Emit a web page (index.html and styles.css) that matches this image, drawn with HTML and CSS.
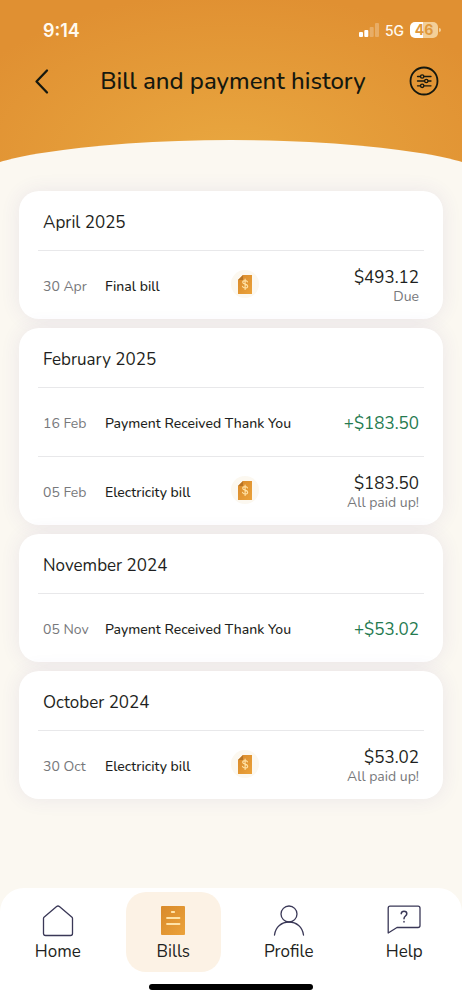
FILE: index.html
```html
<!DOCTYPE html>
<html lang="en">
<head>
  <meta charset="UTF-8">
  <meta name="viewport" content="width=device-width, initial-scale=1.0">
  <title>Bill and payment history</title>
  <link rel="stylesheet" href="styles.css">
</head>
<body>
  <!-- shared shapes for the bill icon -->
  <svg class="defs" width="0" height="0" aria-hidden="true">
    <defs>
      <linearGradient id="gold" x1="0" y1="0" x2="1" y2="1">
        <stop offset="0" stop-color="#d98a2b"/>
        <stop offset="1" stop-color="#eba23a"/>
      </linearGradient>
      <symbol id="bill" viewBox="0 0 28 28">
        <circle cx="14" cy="14" r="14" fill="#fcf8f0"/>
        <path d="M12 5h9v19H7V10z" fill="url(#gold)"/>
        <path d="M12 5v5H7z" fill="#b87526"/>
        <path d="M16.500 11.900c-.3-.9-1.200-1.300-2.400-1.300-1.400 0-2.400.6-2.400 1.700 0 2.500 5 1.200 5 3.900 0 1.100-1.100 1.800-2.500 1.800s-2.400-.6-2.700-1.600M14.100 9.100v10.400" fill="none" stroke="#ffe3a8" stroke-width="1.100" stroke-linecap="round"/>
      </symbol>
    </defs>
  </svg>

  <header class="header">
    <div class="status">
      <span class="time">9:14</span>
      <div class="status-right">
        <svg width="20" height="14" viewBox="0 0 20 14" fill="#fff" aria-hidden="true">
          <rect x="0" y="9" width="4" height="5" rx="1"/>
          <rect x="5.300" y="7" width="4" height="7" rx="1"/>
          <rect x="10.700" y="4" width="4" height="10" rx="1" opacity=".25"/>
          <rect x="16" y="0" width="4" height="14" rx="1" opacity=".25"/>
        </svg>
        <span class="network">5G</span>
        <div class="battery"><span>46</span></div>
      </div>
    </div>
    <div class="title-bar">
      <button class="icon-btn" aria-label="Back">
        <svg width="30" height="30" viewBox="0 0 30 30" fill="none" stroke="#15180f" stroke-width="2.300" stroke-linecap="round" stroke-linejoin="round"><path d="M20 4.500 9.500 15.500 20 26.500"/></svg>
      </button>
      <h1>Bill and payment history</h1>
      <button class="icon-btn" aria-label="Filter">
        <svg width="30" height="30" viewBox="0 0 30 30" fill="none" stroke="#15180f" stroke-width="1.300" stroke-linecap="round">
          <circle cx="15" cy="15" r="13.500" stroke-width="1.800"/>
          <path d="M8.500 10.500h3M15 10.500h7M8.500 15h7M19 15h3M8.500 19.800h3M15 19.800h7"/>
          <circle cx="13.200" cy="10.500" r="1.700"/><circle cx="17.300" cy="15" r="1.700"/><circle cx="13.200" cy="19.800" r="1.700"/>
        </svg>
      </button>
    </div>
    <svg class="curve" viewBox="0 0 462 22" preserveAspectRatio="none" aria-hidden="true"><ellipse cx="231" cy="45.600" rx="270" ry="45.600"/></svg>
  </header>

  <main class="history">
    <section class="card">
      <h2>April 2025</h2>
      <div class="row">
        <span class="date">30 Apr</span>
        <span class="name">Final bill</span>
        <button class="bill-btn" aria-label="View bill"><svg width="28" height="28"><use href="#bill"/></svg></button>
        <div class="amount">$493.12<small>Due</small></div>
      </div>
    </section>

    <section class="card">
      <h2>February 2025</h2>
      <div class="row">
        <span class="date">16 Feb</span>
        <span class="name">Payment Received Thank You</span>
        <div class="amount paid">+$183.50</div>
      </div>
      <div class="row">
        <span class="date">05 Feb</span>
        <span class="name">Electricity bill</span>
        <button class="bill-btn" aria-label="View bill"><svg width="28" height="28"><use href="#bill"/></svg></button>
        <div class="amount">$183.50<small>All paid up!</small></div>
      </div>
    </section>

    <section class="card">
      <h2>November 2024</h2>
      <div class="row">
        <span class="date">05 Nov</span>
        <span class="name">Payment Received Thank You</span>
        <div class="amount paid">+$53.02</div>
      </div>
    </section>

    <section class="card">
      <h2>October 2024</h2>
      <div class="row">
        <span class="date">30 Oct</span>
        <span class="name">Electricity bill</span>
        <button class="bill-btn" aria-label="View bill"><svg width="28" height="28"><use href="#bill"/></svg></button>
        <div class="amount">$53.02<small>All paid up!</small></div>
      </div>
    </section>
  </main>

  <footer class="bottom">
    <nav class="tabs">
      <a href="#home">
        <svg width="34" height="34" viewBox="0 0 34 34" fill="none" stroke="#3a3857" stroke-width="1.300" stroke-linejoin="round"><path d="M15.600 2.600Q17 1.400 18.400 2.600L31 13.300Q31.500 13.800 31.500 14.500V29.500Q31.500 31.500 29.500 31.500H4.500Q2.500 31.500 2.500 29.500V14.500Q2.500 13.800 3 13.300Z"/></svg>
        Home
      </a>
      <a href="#bills" class="active">
        <svg width="34" height="34" viewBox="0 0 34 34">
          <rect x="5" y="2" width="24" height="29" rx="1" fill="url(#gold)"/>
          <path d="M15.800 8h2.400M11 14h12.500M11 20h12.500" stroke="#ffe3a8" stroke-width="1.800" stroke-linecap="round"/>
        </svg>
        Bills
      </a>
      <a href="#profile">
        <svg width="34" height="34" viewBox="0 0 34 34" fill="none" stroke="#3a3857" stroke-width="1.300" stroke-linecap="round"><circle cx="17" cy="10" r="8"/><path d="M2.500 31C3.500 23 9.500 18 17 18s13.500 5 14.500 13"/></svg>
        Profile
      </a>
      <a href="#help">
        <svg width="34" height="34" viewBox="0 0 34 34" fill="none" stroke="#3a3857" stroke-width="1.300" stroke-linejoin="round" stroke-linecap="round">
          <path d="M3 2.200H31Q33 2.200 33 4.200V21.500Q33 23.500 31 23.500H10L1.200 29V4.200Q1.200 2.200 3 2.200Z"/>
          <path d="M14.200 9.700c.2-1.700 1.300-2.500 2.800-2.500 1.700 0 2.800 1 2.800 2.500 0 2.400-2.800 2.300-2.800 5M17 17.600v.3" stroke-width="1.500"/>
        </svg>
        Help
      </a>
    </nav>
    <div class="home-bar"></div>
  </footer>
</body>
</html>
```
FILE: styles.css
```css
* {
  box-sizing: border-box;
}

body {
  margin: 0;
  min-height: 100vh;
  display: flex;
  flex-direction: column;
  font-family: Nunito, Lato, sans-serif;
  color: #1e1f21;
  background: #fbf8f1;
}

button {
  padding: 0;
  border: none;
  background: none;
  cursor: pointer;
}

svg {
  display: block;
}

.defs {
  position: absolute;
}

.header {
  background: radial-gradient(ellipse 300px 170px at 50% 100%, #e9a840, #e09032);
}

.status {
  display: flex;
  align-items: center;
  justify-content: space-between;
  height: 60px;
  padding: 0 24px 0 43px;
  color: #fffaf0;
  font-family: Inter, sans-serif;
}

.time {
  font-size: 18px;
  font-weight: 600;
}

.status-right {
  display: flex;
  align-items: center;
  gap: 6px;
}

.network {
  font-size: 14px;
  font-weight: 500;
}

.battery {
  position: relative;
  width: 28px;
  height: 16px;
  border-radius: 5px;
  background: linear-gradient(90deg, #fff 46%, #f3cf98 46%);
  color: #e0983c;
  font-size: 14px;
  font-weight: 700;
  line-height: 16px;
  text-align: center;
}

.battery::after {
  content: "";
  position: absolute;
  left: 29px;
  top: 6px;
  width: 2px;
  height: 4px;
  border-radius: 0 2px 2px 0;
  background: #f3cf98;
}

.title-bar {
  display: flex;
  align-items: center;
  justify-content: space-between;
  height: 42px;
  padding: 0 23px 0 27px;
}

h1 {
  margin: 0;
  font-size: 24px;
  font-weight: 500;
  color: #15180f;
}

.curve {
  width: 100%;
  height: 22px;
  margin-top: 38px;
  fill: #fbf8f1;
}

.history {
  display: flex;
  flex-direction: column;
  gap: 9px;
  padding: 29px 19px;
}

.card {
  padding: 0 19px;
  border-radius: 20px;
  background: #fff;
  box-shadow: 0 0 20px rgba(80, 60, 160, 0.09);
}

h2 {
  margin: 0;
  padding: 4px 5px 0;
  font-size: 17px;
  font-weight: 400;
  line-height: 55px;
}

.row {
  display: flex;
  align-items: center;
  height: 69px;
  padding: 2px 5px 0;
  border-top: 1px solid #e8e8ea;
  font-size: 14px;
}

.date {
  width: 62px;
  color: #77787b;
}

.name {
  min-width: 126px;
  font-weight: 500;
}

.bill-btn {
  margin-bottom: 4px;
}

.amount {
  margin-left: auto;
  font-size: 17px;
  line-height: 21px;
  text-align: right;
}

.amount small {
  display: block;
  font-size: 14px;
  line-height: 18px;
  color: #77787b;
}

.paid {
  color: #257a4f;
}

.bottom {
  margin-top: auto;
  padding: 4px 0 10px;
  border-radius: 24px 24px 0 0;
  background: #fff;
}

.tabs {
  display: grid;
  grid-template-columns: repeat(4, 1fr);
}

.tabs a {
  display: flex;
  flex-direction: column;
  align-items: center;
  height: 80px;
  margin: 0 10px;
  padding-top: 12px;
  border-radius: 20px;
  color: #1e1f21;
  font-size: 17px;
  line-height: 28px;
  text-decoration: none;
}

.tabs .active {
  background: #fcf2e5;
}

.home-bar {
  width: 164px;
  height: 6px;
  margin: 12px auto 0;
  border-radius: 3px;
  background: #000;
}
```
